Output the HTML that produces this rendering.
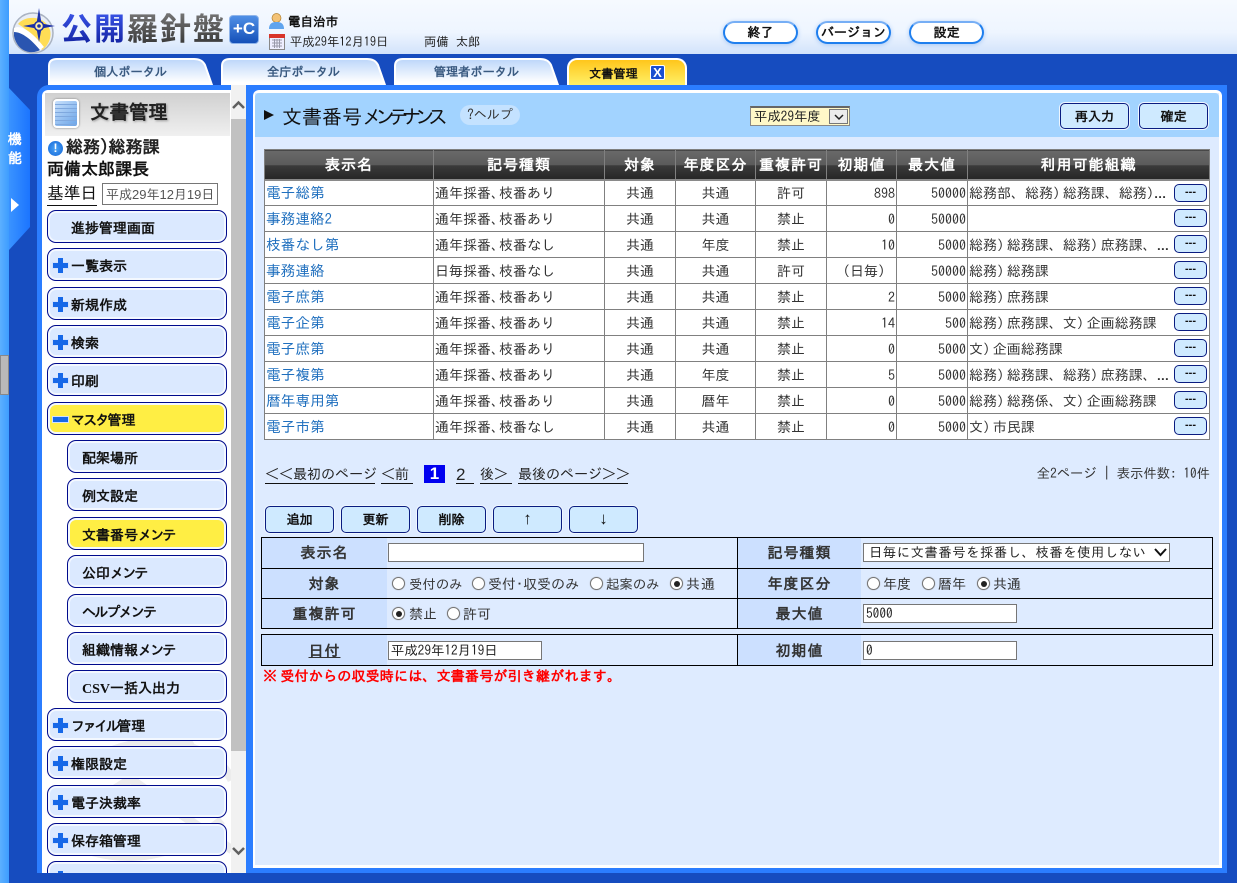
<!DOCTYPE html>
<html lang="ja"><head><meta charset="utf-8"><title>文書番号メンテナンス</title>
<style>
*{box-sizing:border-box}
html,body{margin:0;padding:0}
body{width:1237px;height:883px;overflow:hidden;position:relative;background:#164cbf;font-family:"IPAGothic","Liberation Sans","Noto Sans CJK JP",sans-serif;font-size:13.33px;color:#222}
.a{position:absolute}
#strip{left:0;top:0;width:9px;height:883px;background:linear-gradient(90deg,#5cb0ff,#3d9cff)}
#head{left:9px;top:0;width:1228px;height:54px;background:linear-gradient(#f6faff 0,#eef5ff 60%,#d2e3fb 100%)}
.logo{font-family:"Liberation Sans","Noto Sans CJK JP",sans-serif;font-weight:700;font-size:31px;line-height:36px;white-space:nowrap;letter-spacing:2px}
.logo span{-webkit-background-clip:text;background-clip:text;color:transparent}
.tb{top:21px;height:23px;width:75px;border-radius:12px;background:#fff;border:2px solid #1f7fee;border-top-color:#76aef5;box-shadow:0 1px 5px #a8c8f4;text-align:center;font-weight:bold;font-size:13px;line-height:19px;color:#111;white-space:nowrap}
.tab{position:absolute;top:58px;height:27px;text-align:center;font-weight:bold;font-size:12.2px;line-height:29px;color:#3a5a80}
.tab svg{position:absolute;left:0;top:0}
.tab span{position:relative}
#feat{left:9px;top:88px;width:22px;height:162px;clip-path:polygon(0 0,21px 22px,21px 139px,0 162px);background:linear-gradient(90deg,#3a93ff,#1a73ff)}
#lp{left:37px;top:85px;width:209px;height:788px;background:#2b7dff;border-radius:12px 0 0 0;overflow:hidden}
#lw{left:5px;top:5px;width:204px;height:783px;background:#fff;border-radius:6px 0 0 0;overflow:hidden}
.m{position:absolute;left:5px;width:180px;height:33px;background:#dbe9ff;border:1px solid #000a8c;border-radius:9px;box-shadow:inset 0 0 0 2px #f3f8ff;font-weight:bold;font-size:14px;line-height:34px;padding-left:23px;color:#111;white-space:nowrap}
.m.s{left:25px;width:160px;padding-left:14px;font-size:14px}
.m.y{background:#ffee44}
.m i{position:absolute;left:5px;top:10px;width:15px;height:13px}
.m i:before{content:"";position:absolute;left:0;top:4px;width:15px;height:5px;background:#1668e8;box-shadow:0 0 0 1px #cfe0ff}
.m i:after{content:"";position:absolute;left:5px;top:-1px;width:5px;height:15px;background:#1668e8}
.m.y i:after{display:none}
.k{letter-spacing:-1.8px}
.k2{letter-spacing:-2.4px}
#mp{left:246px;top:85px;width:981px;height:788px;background:#2b7dff}
#mw{left:253px;top:90px;width:969px;height:778px;background:#fff;border-radius:6px 6px 0 0}
#mc{left:255px;top:93px;width:964px;height:772px;background:#deebff}
#mh{left:255px;top:93px;width:964px;height:44px;background:#a2d3ff;border-radius:4px 4px 0 0}
.bt{background:#cfeaff;border:1px solid #0a1c80;border-radius:5px;box-shadow:0 0 0 1px #eef6ff;text-align:center;font-weight:bold;font-size:13px;color:#111}
table{border-collapse:collapse;table-layout:fixed}
#t{left:264px;top:149px;width:945px;background:#fff;color:#333}
#t th{height:30px;padding:0;color:#fff;font-size:15px;letter-spacing:1px;border:1px solid #808080;border-bottom:2px solid #8a8a8a;background:linear-gradient(#696969 0,#5a5a5a 50%,#3a3a3a 52%,#262626 100%)}
#t td{height:26px;padding:0 1px;border:1px solid #808080;white-space:nowrap;overflow:hidden;font-size:14px;line-height:24px;position:relative}
.c{text-align:center}.r{text-align:right}
#t td.l{color:#1f6fbe;font-size:14.67px}
.n{font-style:normal;margin-right:-6px}
.dt{letter-spacing:-3px}
.dots{position:absolute;right:2px;top:3px;width:33px;height:18px;background:#cfeaff;border:1px solid #0a1c80;border-radius:5px;line-height:15px;text-align:center;font:bold 11px/15px "Liberation Sans",sans-serif;color:#111}
.u{position:absolute;top:466px;height:18px;line-height:17px;border-bottom:1px solid #111;font-size:14px;color:#222;white-space:nowrap}
.lab{position:absolute;background:#cce0ff;text-align:center;font-weight:bold;font-size:15px;color:#333;letter-spacing:1px}
.hl{position:absolute;left:261px;width:952px;height:1px;background:#000}
.vl{position:absolute;width:1px;background:#000}
.inp{position:absolute;background:#fff;border:1px solid #767676;height:19px;line-height:17px;font-size:13.33px;padding-left:2px;color:#222}
.rd{position:absolute;width:13px;height:13px;border-radius:50%;background:#fff;border:1px solid #767676;box-shadow:0 0 1px #999}
.rd.on:after{content:"";position:absolute;left:2.5px;top:2.5px;width:6px;height:6px;border-radius:50%;background:#222}
.tx{position:absolute;font-size:14px;line-height:16px;color:#333;white-space:nowrap}
.tx.q{font-size:13.4px}
</style></head><body>
<div class="a" id="strip"></div>
<div class="a" style="left:0;top:355px;width:9px;height:40px;background:#b9b9b9;border:1px solid #888"></div>
<div class="a" id="head"></div>

<svg class="a" style="left:12px;top:6px" width="46" height="48" viewBox="12 6 46 48">
<circle cx="33" cy="33" r="20" fill="#e8edf5" stroke="#aab3c2" stroke-width="1.500"/>
<path d="M18 24C25 15 45 15 50 30C52 38 48 46 42 50C38 40 28 30 18 24Z" fill="#ffdd55"/>
<path d="M14 30C20 30 30 38 40 50C34 54 18 54 14 36Z" fill="#2a55b0"/>
<path d="M14 28C22 24 34 34 44 47L40 50C32 40 22 32 14 32Z" fill="#fff"/>
<path d="M39 8L41.500 23.500 55 26 41.500 28.500 39 42 36.500 28.500 23 26 36.500 23.500Z" fill="#1a2fa8"/>
<circle cx="39" cy="26" r="4.500" fill="#ffeeaa" stroke="#1a2fa8" stroke-width="1.500"/><circle cx="39" cy="26" r="1.800" fill="#1a2fa8"/>
</svg>
<div class="a logo" style="left:61px;top:12px"><span style="background-image:linear-gradient(#3a55e8,#101f9c)">公開</span><span style="background-image:linear-gradient(#777,#333)">羅針盤</span></div>
<div class="a" style="left:229px;top:15px;width:30px;height:29px;border-radius:4px;border:1px solid #8fb4ea;background:linear-gradient(#4f8fe6,#1550b8);color:#fff;font:bold 17px/26px 'Liberation Sans',sans-serif;text-align:center">+C</div>

<svg class="a" style="left:269px;top:13px" width="15" height="17" viewBox="0 0 15 17"><circle cx="7.500" cy="5" r="4.500" fill="#f3c276" stroke="#b08030" stroke-width=".7"/><path d="M0 16C0 10 4 9 7.500 9S15 10 15 16Z" fill="#5fa4ee"/></svg>
<div class="a" style="left:288px;top:14px;font-weight:bold;font-size:12.5px;color:#111;line-height:15px">電自治市</div>
<svg class="a" style="left:269px;top:34px" width="16" height="16" viewBox="0 0 16 16"><rect x=".5" y=".5" width="15" height="15" fill="#eef" stroke="#888"/><rect width="16" height="4" fill="#d8342a"/><path d="M3 6h10M3 9h10M3 12h10M5.500 5v9M8 5v9M10.500 5v9" stroke="#99a"/></svg>
<div class="a" style="left:290px;top:35px;font-size:12.3px;line-height:15px;color:#222;white-space:nowrap">平成29年12月19日</div>
<div class="a" style="left:424px;top:35px;font-size:12.3px;line-height:15px;color:#222;white-space:nowrap;word-spacing:1px">両備&nbsp;太郎</div>

<div class="a tb" style="left:723px">終了</div>
<div class="a tb" style="left:816px">バージョン</div>
<div class="a tb" style="left:909px">設定</div>

<svg width="0" height="0" style="position:absolute"><defs><linearGradient id="tg" x1="0" y1="0" x2="0" y2="1"><stop offset="0" stop-color="#bcd6fa"/><stop offset=".9" stop-color="#fff"/></linearGradient></defs></svg>
<div class="tab" style="left:48px;width:165px"><svg width="165" height="27"><path d="M1 27V8Q1 1 9 1H146Q154 1 157 7L164 27Z" fill="url(#tg)" stroke="#fff" stroke-width="2"/></svg><span>個人ポータル</span></div>
<div class="tab" style="left:221px;width:165px"><svg width="165" height="27"><path d="M1 27V8Q1 1 9 1H146Q154 1 157 7L164 27Z" fill="url(#tg)" stroke="#fff" stroke-width="2"/></svg><span>全庁ポータル</span></div>
<div class="tab" style="left:394px;width:165px"><svg width="165" height="27"><path d="M1 27V8Q1 1 9 1H146Q154 1 157 7L164 27Z" fill="url(#tg)" stroke="#fff" stroke-width="2"/></svg><span>管理者ポータル</span></div>
<div class="a" style="left:567px;top:58px;width:120px;height:27px;border:2px solid #fff;border-bottom:0;border-radius:10px 10px 0 0;background:linear-gradient(#ffc61c,#fff066);color:#111;font-weight:bold;font-size:12.2px;line-height:29px;padding-left:20px">文書管理<span style="position:absolute;left:81px;top:5px;width:15px;height:15px;background:#1a4fd0;border:1px solid #fff;border-radius:2px;color:#fff;font:bold 13px/14px 'Liberation Sans',sans-serif;text-align:center">X</span></div>

<div class="a" id="feat"></div>
<div class="a" style="left:8px;top:130px;width:14px;color:#fff;font-weight:bold;font-size:14px;line-height:19px;text-align:center">機<br>能</div>
<div class="a" style="left:11px;top:198px;width:0;height:0;border-left:8px solid #fff;border-top:7px solid transparent;border-bottom:7px solid transparent"></div>

<div class="a" id="lp"><div class="a" id="lw">
<svg class="a" style="left:0;top:640px" width="190" height="143" viewBox="0 0 190 143"><g fill="none" stroke="#ececec" stroke-width="9"><path d="M50 30C100 0 170 10 190 50"/><path d="M40 80L150 10M90 50L190 120M20 110C60 130 120 140 180 90"/></g></svg>
<div class="a" style="left:3px;top:3px;width:185px;height:43px;background:linear-gradient(#d0d0d0,#f0f0f0)"></div>
<div class="a" style="left:11px;top:9px;width:26px;height:29px;border:2px solid #fff;border-radius:4px;background:repeating-linear-gradient(transparent 0,transparent 3px,#7fa8de 3px,#7fa8de 4px),linear-gradient(135deg,#c8e0fb,#6aa4e8);box-shadow:0 0 2px #777"></div>
<div class="a" style="left:48px;top:12px;font-weight:bold;font-size:19.5px;line-height:22px;color:#222;text-shadow:1px 1px 2px #999">文書管理</div>
<div class="a" style="left:6px;top:51px;width:15px;height:15px;border-radius:50%;background:radial-gradient(#4aa3f5,#1466d8);color:#fff;font:bold 12px/15px 'Liberation Sans',sans-serif;text-align:center">!</div>
<div class="a" style="left:24px;top:48px;font-weight:bold;font-size:17px;line-height:19px;color:#222;white-space:nowrap">総務)総務課</div>
<div class="a" style="left:5px;top:70px;font-size:17px;line-height:20px;color:#111;font-weight:bold;white-space:nowrap">両備太郎課長</div>
<div class="a" style="left:5px;top:93px;font-size:16.7px;line-height:22px;color:#111;border-bottom:1px solid #111;white-space:nowrap">基準日</div>
<div class="a" style="left:60px;top:93px;width:116px;height:22px;border:1px solid #767676;background:#fff;font:13px/21px 'Liberation Sans','IPAGothic',sans-serif;color:#555;padding-left:3px;white-space:nowrap">平成29年12月19日</div>

<div class="m" style="top:120px">進捗管理画面</div>
<div class="m" style="top:158px"><i></i>一覧表示</div>
<div class="m" style="top:197px"><i></i>新規作成</div>
<div class="m" style="top:235px"><i></i>検索</div>
<div class="m" style="top:273px"><i></i>印刷</div>
<div class="m y" style="top:312px"><i></i><span class="k">マスタ</span>管理</div>
<div class="m s" style="top:350px">配架場所</div>
<div class="m s" style="top:388px">例文設定</div>
<div class="m s y" style="top:427px">文書番号<span class="k">メンテ</span></div>
<div class="m s" style="top:465px">公印<span class="k">メンテ</span></div>
<div class="m s" style="top:504px"><span class="k">ヘルプメンテ</span></div>
<div class="m s" style="top:542px">組織情報<span class="k">メンテ</span></div>
<div class="m s" style="top:580px"><span style="font-family:'Liberation Serif',serif">CSV</span>一括入出力</div>
<div class="m" style="top:618px"><i></i><span class="k2">ファイル</span>管理</div>
<div class="m" style="top:656px"><i></i>権限設定</div>
<div class="m" style="top:695px"><i></i>電子決裁率</div>
<div class="m" style="top:733px"><i></i>保存箱管理</div>
<div class="m" style="top:771px"><i></i></div>
</div></div>

<div class="a" style="left:231px;top:85px;width:16px;height:788px;background:#f1f1f1"></div>
<div class="a" style="left:231px;top:119px;width:15px;height:632px;background:#c1c1c1"></div>
<svg class="a" style="left:231px;top:98px" width="15" height="14" viewBox="0 0 15 14"><path d="M2 10L7.500 4.500 13 10" fill="none" stroke="#606060" stroke-width="2.500"/></svg>
<svg class="a" style="left:231px;top:844px" width="15" height="14" viewBox="0 0 15 14"><path d="M2 4L7.500 9.500 13 4" fill="none" stroke="#606060" stroke-width="2.500"/></svg>

<div class="a" id="mp"></div><div class="a" id="mw"></div><div class="a" id="mc"></div><div class="a" id="mh"></div>
<div class="a" style="left:264px;top:110px;width:0;height:0;border-left:10px solid #111;border-top:5.500px solid transparent;border-bottom:5.500px solid transparent"></div>
<div class="a" style="left:282px;top:105px;font-size:20px;line-height:24px;color:#111;white-space:nowrap">文書番号<span style="letter-spacing:-6.8px">メンテナンス</span></div>
<div class="a" style="left:460px;top:105px;width:60px;height:20px;border-radius:10px;background:#c4e2ff;font-size:13px;line-height:20px;text-align:center;color:#333">?ヘルプ</div>
<div class="a" style="left:750px;top:106px;width:100px;height:20px;background:#fff8c8;border:1px solid #888;border-top:2px solid #666;font-size:13.33px;line-height:17px;padding-left:3px;color:#222">平成29年度<span style="position:absolute;right:1px;top:1px;width:19px;height:15px;background:#ececec;border:1px solid #777"><svg style="position:absolute;left:4px;top:3px" width="10" height="8" viewBox="0 0 10 8"><path d="M1 2L5 6 9 2" fill="none" stroke="#222" stroke-width="1.500"/></svg></span></div>
<div class="a bt" style="left:1060px;top:103px;width:69px;height:26px;line-height:25px">再入力</div>
<div class="a bt" style="left:1139px;top:103px;width:69px;height:26px;line-height:25px">確定</div>

<table class="a" id="t"><colgroup><col style="width:169px"><col style="width:171px"><col style="width:71px"><col style="width:80px"><col style="width:71px"><col style="width:70px"><col style="width:71px"><col style="width:242px"></colgroup>
<tr><th>表示名</th><th>記号種類</th><th>対象</th><th>年度区分</th><th>重複許可</th><th>初期値</th><th>最大値</th><th>利用可能組織</th></tr>
<tr><td class="l">電子総第</td><td>通年採番<i class="n">、</i>枝番あり</td><td class="c">共通</td><td class="c">共通</td><td class="c">許可</td><td class="r">898</td><td class="r">50000</td><td>総務部、総務)&#8201;総務課、総務)<span class="dt">...</span><span class="dots">---</span></td></tr>
<tr><td class="l">事務連絡2</td><td>通年採番<i class="n">、</i>枝番あり</td><td class="c">共通</td><td class="c">共通</td><td class="c">禁止</td><td class="r">0</td><td class="r">50000</td><td><span class="dots">---</span></td></tr>
<tr><td class="l">枝番なし第</td><td>通年採番<i class="n">、</i>枝番なし</td><td class="c">共通</td><td class="c">年度</td><td class="c">禁止</td><td class="r">10</td><td class="r">5000</td><td>総務)&#8201;総務課、総務)&#8201;庶務課、<span class="dt">...</span><span class="dots">---</span></td></tr>
<tr><td class="l">事務連絡</td><td>日毎採番<i class="n">、</i>枝番なし</td><td class="c">共通</td><td class="c">共通</td><td class="c">許可</td><td class="r"><span style="padding-right:3px">（日毎）</span></td><td class="r">50000</td><td>総務)&#8201;総務課<span class="dots">---</span></td></tr>
<tr><td class="l">電子庶第</td><td>通年採番<i class="n">、</i>枝番あり</td><td class="c">共通</td><td class="c">共通</td><td class="c">禁止</td><td class="r">2</td><td class="r">5000</td><td>総務)&#8201;庶務課<span class="dots">---</span></td></tr>
<tr><td class="l">電子企第</td><td>通年採番<i class="n">、</i>枝番あり</td><td class="c">共通</td><td class="c">共通</td><td class="c">禁止</td><td class="r">14</td><td class="r">500</td><td>総務)&#8201;庶務課、文)&#8201;企画総務課<span class="dots">---</span></td></tr>
<tr><td class="l">電子庶第</td><td>通年採番<i class="n">、</i>枝番あり</td><td class="c">共通</td><td class="c">共通</td><td class="c">禁止</td><td class="r">0</td><td class="r">5000</td><td>文)&#8201;企画総務課<span class="dots">---</span></td></tr>
<tr><td class="l">電子複第</td><td>通年採番<i class="n">、</i>枝番あり</td><td class="c">共通</td><td class="c">年度</td><td class="c">禁止</td><td class="r">5</td><td class="r">5000</td><td>総務)&#8201;総務課、総務)&#8201;庶務課、<span class="dt">...</span><span class="dots">---</span></td></tr>
<tr><td class="l">暦年専用第</td><td>通年採番<i class="n">、</i>枝番あり</td><td class="c">共通</td><td class="c">暦年</td><td class="c">禁止</td><td class="r">0</td><td class="r">5000</td><td>総務)&#8201;総務係、文)&#8201;企画総務課<span class="dots">---</span></td></tr>
<tr><td class="l">電子市第</td><td>通年採番<i class="n">、</i>枝番なし</td><td class="c">共通</td><td class="c">共通</td><td class="c">禁止</td><td class="r">0</td><td class="r">5000</td><td>文)&#8201;市民課<span class="dots">---</span></td></tr>
</table>

<div class="u" style="left:265px;width:110px">＜＜最初のページ</div>
<div class="u" style="left:381px;width:32px">＜前</div>
<div class="a" style="left:424px;top:465px;width:21px;height:18px;background:#0000f0;color:#fff;font:bold 17px/18px 'Liberation Sans',sans-serif;text-align:center">1</div>
<div class="u" style="left:456px;width:18px;font:17px/17px 'Liberation Sans',sans-serif">2</div>
<div class="u" style="left:480px;width:32px">後＞</div>
<div class="u" style="left:518px;width:110px">最後のページ＞＞</div>
<div class="a" style="right:27px;top:465px;font-size:13.33px;line-height:16px;color:#333;white-space:nowrap">全2ページ | 表示件数: 10件</div>

<div class="a bt" style="left:265px;top:506px;width:69px;height:27px;line-height:26px">追加</div>
<div class="a bt" style="left:341px;top:506px;width:69px;height:27px;line-height:26px">更新</div>
<div class="a bt" style="left:417px;top:506px;width:69px;height:27px;line-height:26px">削除</div>
<div class="a bt" style="left:493px;top:506px;width:69px;height:27px;font:bold 17px/24px 'Liberation Sans',sans-serif">↑</div>
<div class="a bt" style="left:569px;top:506px;width:69px;height:27px;font:bold 17px/24px 'Liberation Sans',sans-serif">↓</div>

<div class="lab" style="left:262px;top:538px;width:125px;height:30px;line-height:30px">表示名</div>
<div class="lab" style="left:262px;top:569px;width:125px;height:29px;line-height:29px">対象</div>
<div class="lab" style="left:262px;top:599px;width:125px;height:29px;line-height:29px">重複許可</div>
<div class="lab" style="left:738px;top:538px;width:123px;height:30px;line-height:30px">記号種類</div>
<div class="lab" style="left:738px;top:569px;width:123px;height:29px;line-height:29px">年度区分</div>
<div class="lab" style="left:738px;top:599px;width:123px;height:29px;line-height:29px">最大値</div>
<div class="lab" style="left:262px;top:635px;width:125px;height:30px;line-height:31px"><u>日付</u></div>
<div class="lab" style="left:738px;top:635px;width:123px;height:30px;line-height:31px">初期値</div>

<div class="hl" style="top:537px"></div><div class="hl" style="top:568px"></div><div class="hl" style="top:598px"></div><div class="hl" style="top:628px"></div>
<div class="hl" style="top:634px"></div><div class="hl" style="top:665px"></div>
<div class="vl" style="left:261px;top:537px;height:92px"></div><div class="vl" style="left:737px;top:537px;height:92px"></div><div class="vl" style="left:1212px;top:537px;height:92px"></div>
<div class="vl" style="left:261px;top:634px;height:32px"></div><div class="vl" style="left:737px;top:634px;height:32px"></div><div class="vl" style="left:1212px;top:634px;height:32px"></div>

<div class="inp" style="left:388px;top:543px;width:256px"></div>
<div class="inp" style="left:863px;top:543px;width:307px;letter-spacing:.55px;padding-left:5px;white-space:nowrap">日毎に文書番号を採番し、枝番を使用しない<svg style="position:absolute;right:2px;top:4px" width="13" height="9" viewBox="0 0 13 9"><path d="M1 1L6.500 7 12 1" fill="none" stroke="#111" stroke-width="2"/></svg></div>
<div class="inp" style="left:863px;top:604px;width:154px">5000</div>
<div class="inp" style="left:388px;top:641px;width:154px">平成29年12月19日</div>
<div class="inp" style="left:863px;top:641px;width:154px">0</div>

<div class="rd" style="left:392px;top:577px"></div><div class="tx q" style="left:409px;top:576px">受付のみ</div>
<div class="rd" style="left:472px;top:577px"></div><div class="tx" style="left:488px;top:576px">受付･収受のみ</div>
<div class="rd" style="left:590px;top:577px"></div><div class="tx q" style="left:606px;top:576px">起案のみ</div>
<div class="rd on" style="left:670px;top:577px"></div><div class="tx" style="left:686px;top:576px;letter-spacing:1px">共通</div>
<div class="rd on" style="left:392px;top:607px"></div><div class="tx" style="left:409px;top:606px">禁止</div>
<div class="rd" style="left:447px;top:607px"></div><div class="tx" style="left:463px;top:606px">許可</div>
<div class="rd" style="left:867px;top:577px"></div><div class="tx" style="left:883px;top:576px">年度</div>
<div class="rd" style="left:922px;top:577px"></div><div class="tx" style="left:938px;top:576px">暦年</div>
<div class="rd on" style="left:977px;top:577px"></div><div class="tx" style="left:993px;top:576px">共通</div>

<div class="a" style="left:263px;top:668px;color:#f00;font-weight:bold;font-size:14px;letter-spacing:.2px;line-height:16px;white-space:nowrap"><span style="word-spacing:-4px">※ </span>受付からの収受時には、文書番号が引き継がれます。</div>
</body></html>
